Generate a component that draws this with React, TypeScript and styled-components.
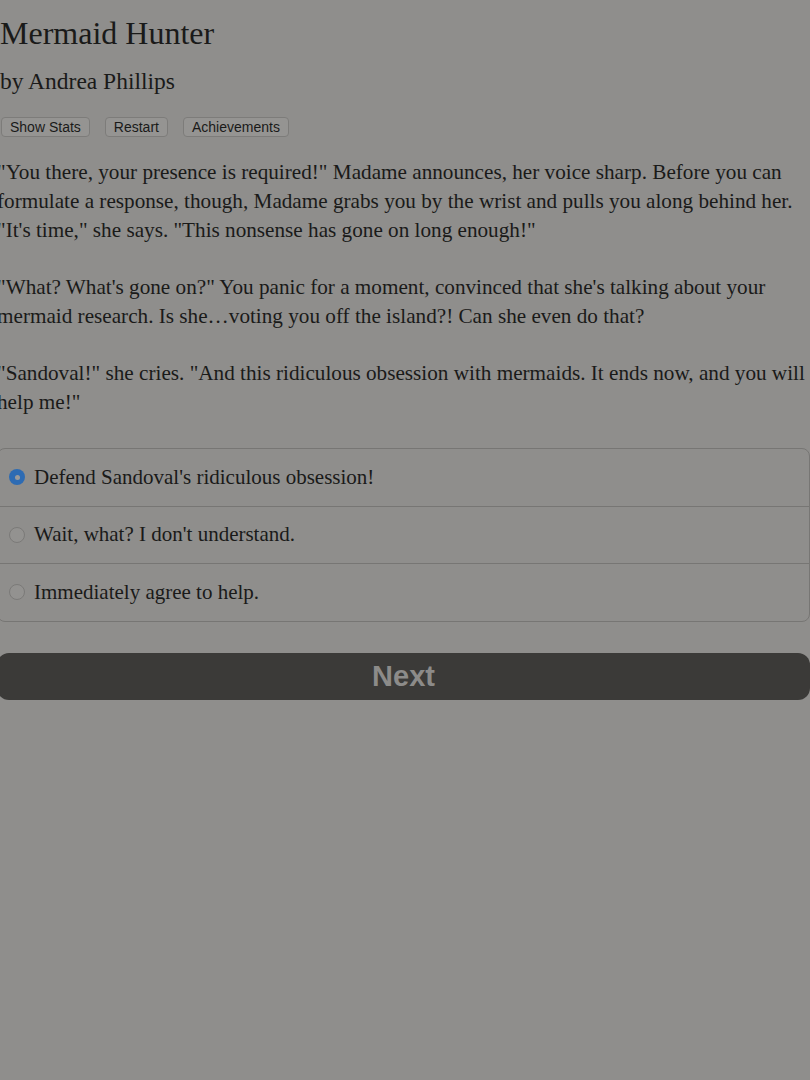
import React, { useState } from "react";
import styled, { createGlobalStyle } from "styled-components";

const Global = createGlobalStyle`
  html, body { margin: 0; padding: 0; background: #8f8e8c; }
  body { font-family: "Liberation Serif", "Times New Roman", serif; color: #1a1a19; overflow: hidden; }
`;

const Page = styled.div`
  width: 813px;
  margin-left: -3px;
  min-height: 1080px;
  box-sizing: border-box;
  padding-top: 14px;
`;

const Title = styled.h1`
  margin: 0 0 0 3px;
  font-weight: normal;
  font-size: 32px;
  line-height: 38px;
`;

const Author = styled.h2`
  margin: 15px 0 0 3px;
  font-weight: normal;
  font-size: 23.5px;
  line-height: 28px;
`;

const Toolbar = styled.div`
  display: flex;
  gap: 15px;
  margin: 22px 0 0 4px;
`;

const ToolButton = styled.button`
  height: 20px;
  padding: 0 8px;
  font-family: "Liberation Sans", Arial, sans-serif;
  font-size: 14px;
  color: #1a1a19;
  background: #959492;
  border: 1px solid #7d7c7a;
  border-radius: 4px;
  line-height: 18px;
`;

const Story = styled.div`
  margin-top: 21px;
  font-size: 21.2px;
  line-height: 29px;
`;

const Para = styled.p`
  margin: 0 0 28px 0;
  &:last-child { margin-bottom: 0; }
`;

const Choices = styled.div`
  margin-top: 31px;
  border: 1px solid #777674;
  border-radius: 8px;
  overflow: hidden;
`;

const Choice = styled.label`
  display: flex;
  align-items: center;
  height: 56.5px;
  padding-left: 11px;
  font-size: 21px;
  cursor: pointer;
  & + & { border-top: 1px solid #777674; }
`;

const Radio = styled.span<{ $on: boolean }>`
  width: 16px;
  height: 16px;
  box-sizing: border-box;
  border-radius: 50%;
  margin-right: 9px;
  flex: none;
  display: flex;
  align-items: center;
  justify-content: center;
  background: ${(p) => (p.$on ? "#2d6bb3" : "#939290")};
  border: ${(p) => (p.$on ? "none" : "1px solid #7b7a78")};
  &::after {
    content: "";
    width: 5px;
    height: 5px;
    border-radius: 50%;
    background: ${(p) => (p.$on ? "#9a9a9a" : "transparent")};
  }
`;

const NextButton = styled.button`
  display: block;
  width: 100%;
  height: 47px;
  margin-top: 31px;
  background: #3b3a38;
  border: none;
  border-radius: 12px;
  color: #8c8b89;
  font-family: "Liberation Sans", Arial, sans-serif;
  font-weight: bold;
  font-size: 29px;
`;

const choices = [
  "Defend Sandoval's ridiculous obsession!",
  "Wait, what? I don't understand.",
  "Immediately agree to help.",
];

export default function App() {
  const [sel, setSel] = useState(0);
  return (
    <>
      <Global />
      <Page>
        <Title>Mermaid Hunter</Title>
        <Author>by Andrea Phillips</Author>
        <Toolbar>
          <ToolButton>Show Stats</ToolButton>
          <ToolButton>Restart</ToolButton>
          <ToolButton>Achievements</ToolButton>
        </Toolbar>
        <Story>
          <Para>
            "You there, your presence is required!" Madame announces, her voice sharp. Before you can formulate a response, though, Madame grabs you by the wrist and pulls you along behind her. "It's time," she says. "This nonsense has gone on long enough!"
          </Para>
          <Para>
            "What? What's gone on?" You panic for a moment, convinced that she's talking about your mermaid research. Is she…voting you off the island?! Can she even do that?
          </Para>
          <Para>
            "Sandoval!" she cries. "And this ridiculous obsession with mermaids. It ends now, and you will help me!"
          </Para>
        </Story>
        <Choices>
          {choices.map((c, i) => (
            <Choice key={c} onClick={() => setSel(i)}>
              <Radio $on={sel === i} />
              {c}
            </Choice>
          ))}
        </Choices>
        <NextButton>Next</NextButton>
      </Page>
    </>
  );
}
